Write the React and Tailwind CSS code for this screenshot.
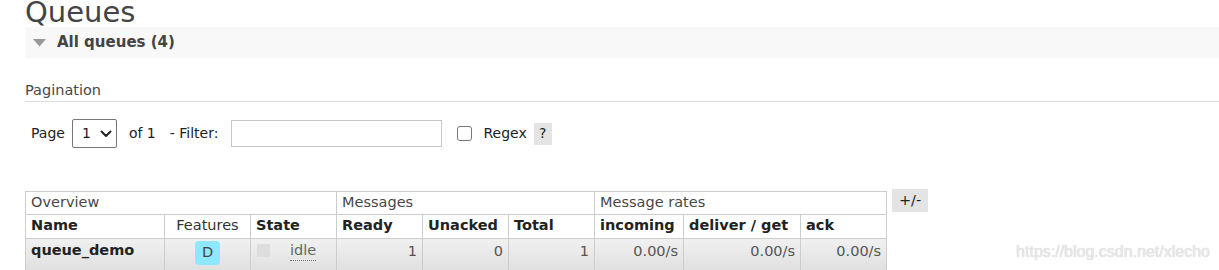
import React from 'react';

const th = 'border border-[#cccccc] px-[5px] h-[24px] text-left align-middle font-bold text-[#222]';
const td = 'border border-[#cccccc] px-[5px] pt-[2px] h-[36px] align-top leading-[20px] text-right text-[#555]';

const Chevron = () => (
  <svg width="12" height="8" viewBox="0 0 12 8" fill="none">
    <path d="M1.5 1.5l4.5 4.5 4.5-4.5" stroke="#222" strokeWidth="2" strokeLinecap="round" strokeLinejoin="round" />
  </svg>
);

const App = () => {
  return (
    <div className="relative w-[1219px] h-[270px] overflow-hidden bg-white pl-[25px] font-['DejaVu_Sans',sans-serif] text-[#484848]">
      {/* page title, cut off by the top edge */}
      <h1 className="h-[29px] -mt-[2px] text-[29px] leading-[29px] text-[#444]">Queues</h1>

      <div className="flex items-center h-[31px] bg-[#f8f8f8] pl-[8px]">
        <svg width="13" height="8" viewBox="0 0 13 8" className="mr-[11px]">
          <polygon points="0,0 13,0 6.5,7.5" fill="#999" />
        </svg>
        <span className="font-bold text-[15px] text-[#444]">All queues (4)</span>
      </div>

      <h3 className="mt-[22px] h-[22px] leading-[20px] text-[14.5px] text-[#484848] border-b border-[#dddddd]">
        Pagination
      </h3>

      {/* paging + filter */}
      <div className="flex items-center h-[29px] mt-[17px] pl-[6px] text-[14px] text-[#222]">
        <span>Page</span>
        <div className="ml-[7px] flex items-center w-[45px] h-[29px] border border-[#767676] rounded-[2px] pl-[9px]">
          <span>1</span>
          <span className="ml-[9px]"><Chevron /></span>
        </div>
        <span className="ml-[12px]">of 1</span>
        <span className="ml-[14px]">- Filter:</span>
        <div className="ml-[13px] w-[211px] h-[27px] border border-[#c8c8c8]" />
        <div className="ml-[15px] w-[15px] h-[15px] border border-[#767676] rounded-[3px] bg-white" />
        <span className="ml-[11px]">Regex</span>
        <span className="ml-[7px] flex items-center justify-center w-[18px] h-[22px] bg-[#e4e4e4]">?</span>
      </div>

      {/* queue list */}
      <div className="flex items-start mt-[41px]">
        <table className="mt-[2px] w-[862px] table-fixed border-collapse text-[14.5px]">
          <colgroup>
            <col className="w-[139px]" />
            <col className="w-[86px]" />
            <col className="w-[86px]" />
            <col className="w-[86px]" />
            <col className="w-[86px]" />
            <col className="w-[86px]" />
            <col className="w-[89px]" />
            <col className="w-[117px]" />
            <col className="w-[86px]" />
          </colgroup>
          <thead>
            <tr>
              <th colSpan={3} className="border border-[#cccccc] px-[5px] h-[22px] text-left font-normal text-[#484848]">Overview</th>
              <th colSpan={3} className="border border-[#cccccc] px-[5px] h-[22px] text-left font-normal text-[#484848]">Messages</th>
              <th colSpan={3} className="border border-[#cccccc] px-[5px] h-[22px] text-left font-normal text-[#484848]">Message rates</th>
            </tr>
            <tr>
              <th className={th}>Name</th>
              <th className="border border-[#cccccc] px-[5px] h-[24px] text-center font-normal text-[#333]">Features</th>
              <th className={th}>State</th>
              <th className={th}>Ready</th>
              <th className={th}>Unacked</th>
              <th className={th}>Total</th>
              <th className={th}>incoming</th>
              <th className={th}>deliver / get</th>
              <th className={th}>ack</th>
            </tr>
          </thead>
          <tbody>
            <tr className="bg-gradient-to-b from-[#f1f1f1] to-[#dedede]">
              <td className="border border-[#cccccc] px-[5px] pt-[1px] h-[36px] align-top leading-[20px] font-bold text-[#222]">queue_demo</td>
              <td className="border border-[#cccccc] pt-[2px] h-[36px] align-top">
                <div className="mx-auto flex items-center justify-center w-[25px] h-[24px] rounded-[4px] bg-[#8ee8ff] text-[#444]">D</div>
              </td>
              <td className="border border-[#cccccc] pl-[6px] pt-[1px] h-[36px] align-top leading-[20px] text-[#666]">
                <div className="flex items-start">
                  <span className="mt-[4px] w-[13px] h-[13px] bg-[#dddddd]" />
                  <span className="ml-[20px] border-b border-dotted border-[#777]">idle</span>
                </div>
              </td>
              <td className={td}>1</td>
              <td className={td}>0</td>
              <td className={td}>1</td>
              <td className={td}>0.00/s</td>
              <td className={td}>0.00/s</td>
              <td className={td}>0.00/s</td>
            </tr>
          </tbody>
        </table>
        <span className="ml-[5px] flex items-center justify-center w-[36px] h-[23px] bg-[#e4e4e4] text-[14.5px] text-[#222]">+/-</span>
      </div>

      {/* blog watermark */}
      <span className="absolute right-[9px] top-[240px] font-['Liberation_Sans',sans-serif] text-[16px] text-[#e8e8e8] [text-shadow:0_0_1px_#c8c8c8]">
        https://blog.csdn.net/xlecho
      </span>
    </div>
  );
};

export default App;
